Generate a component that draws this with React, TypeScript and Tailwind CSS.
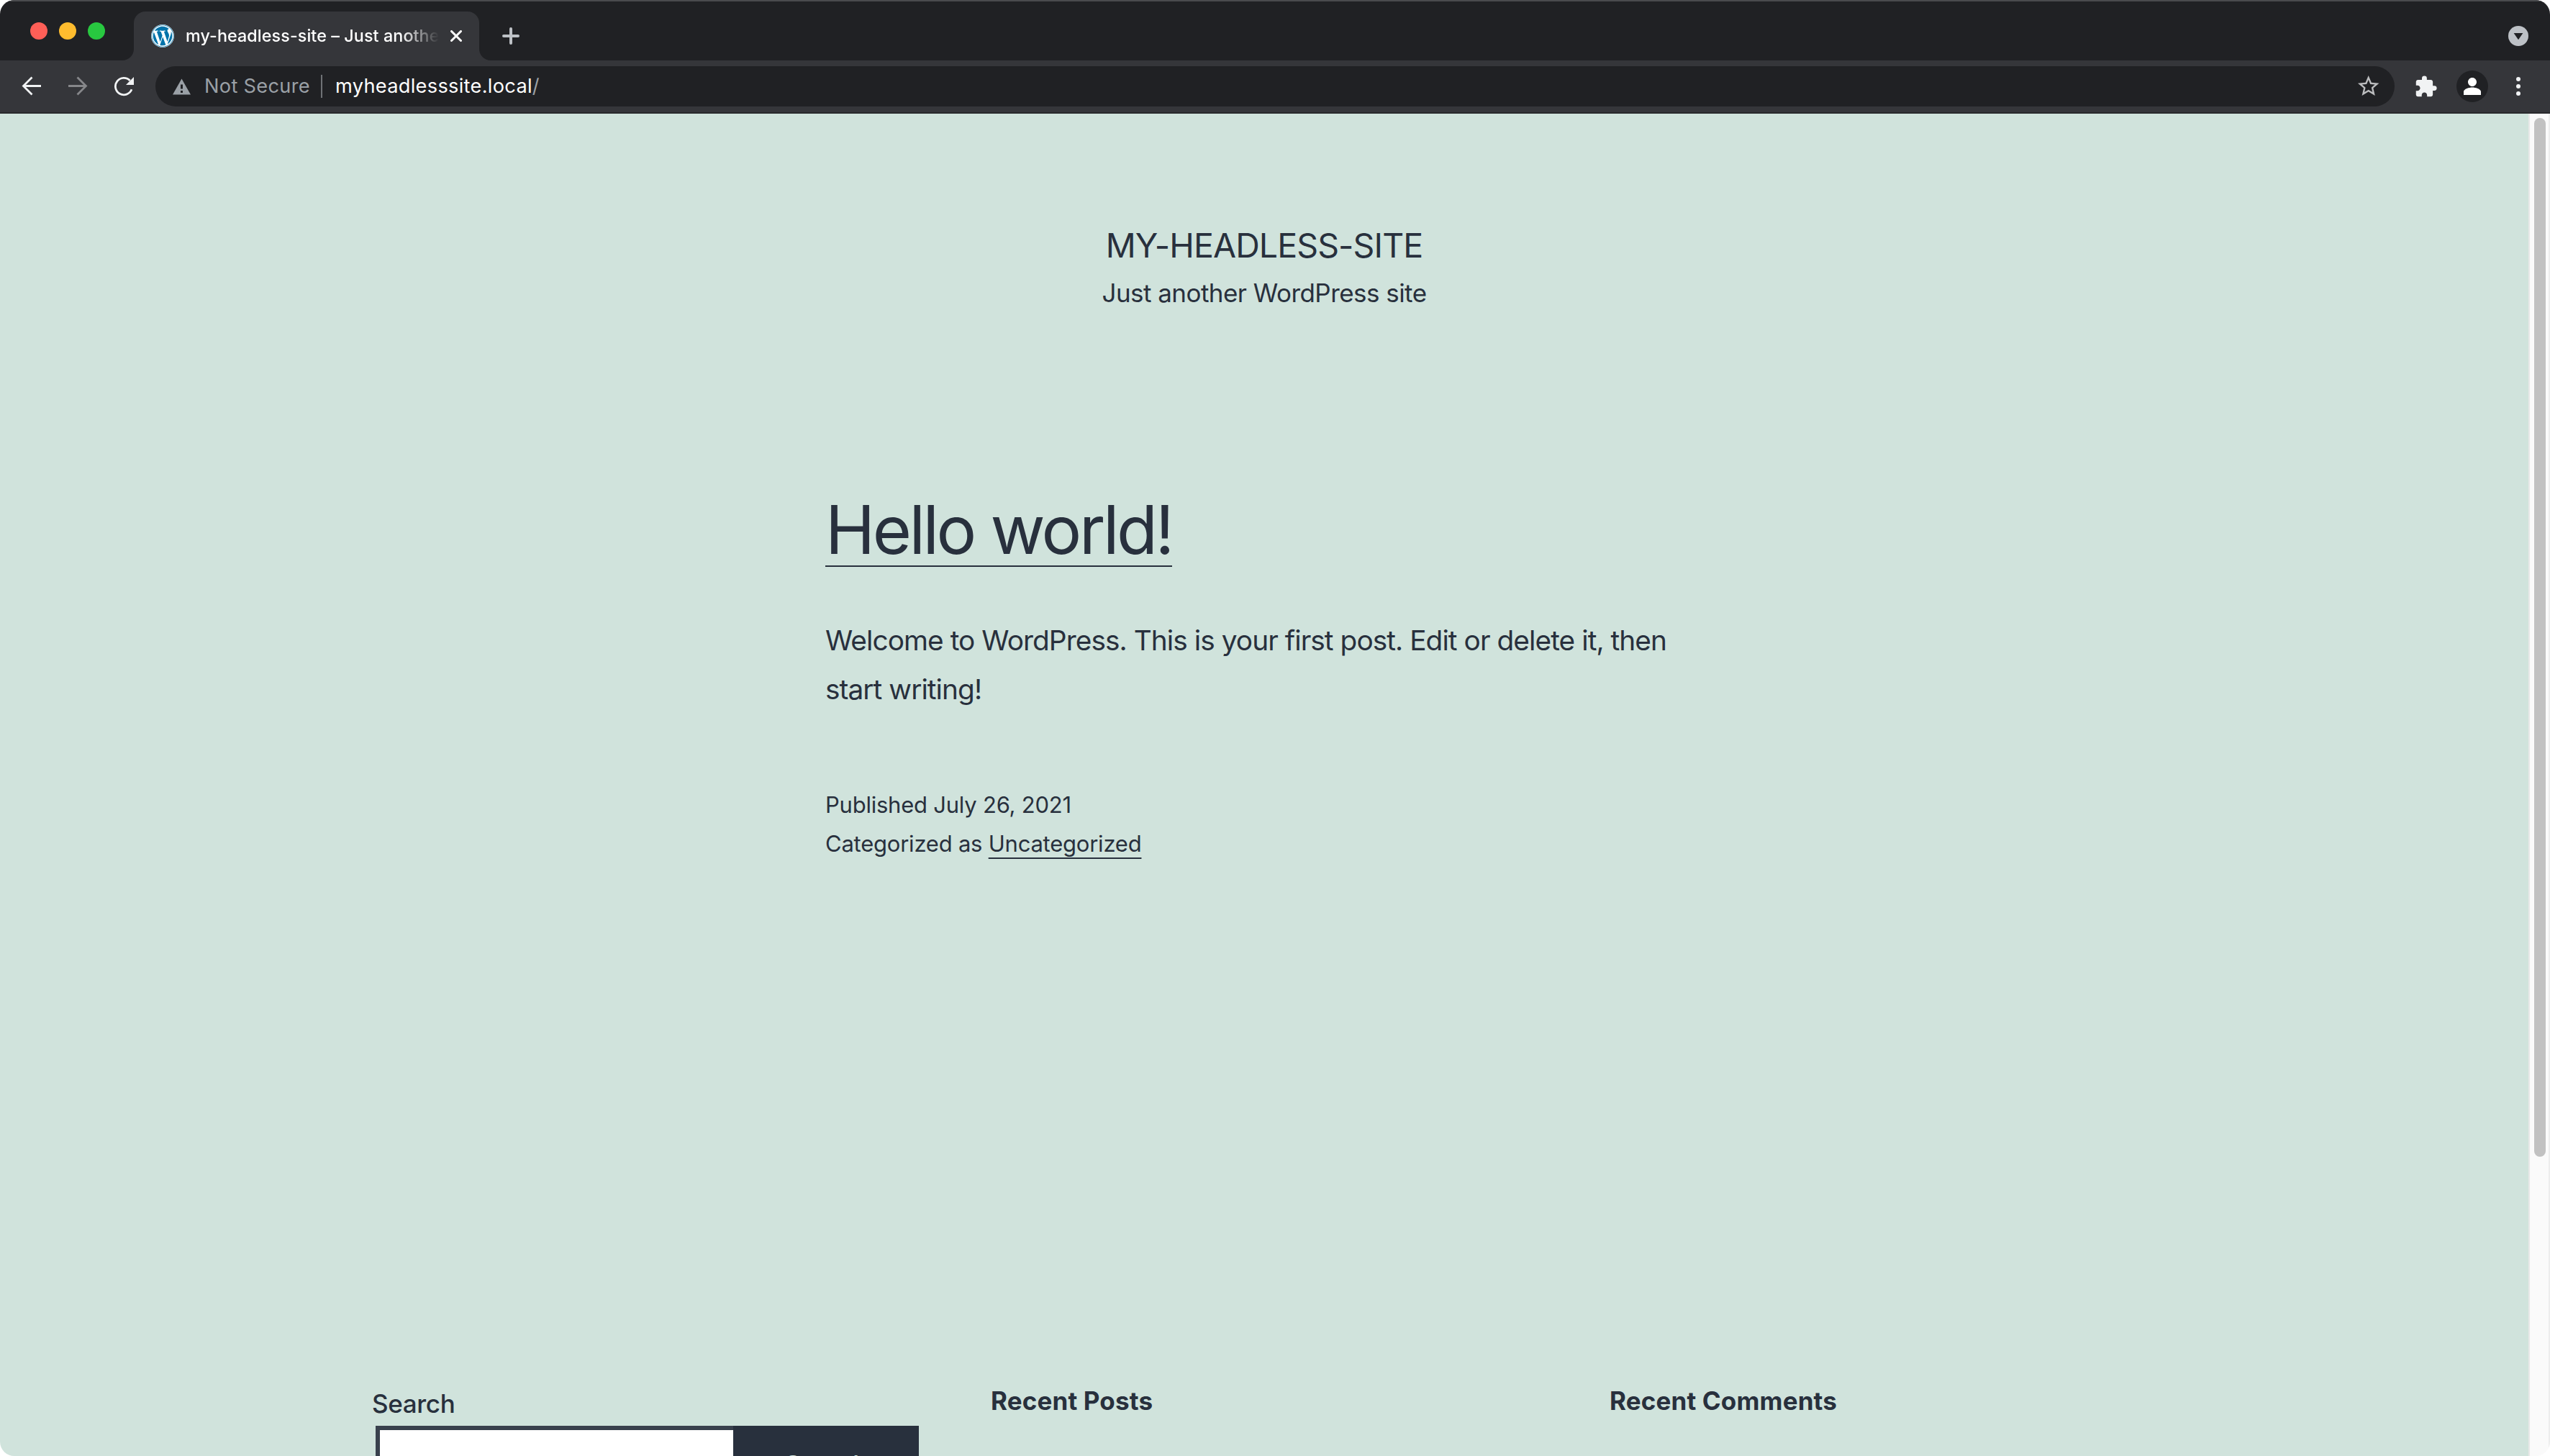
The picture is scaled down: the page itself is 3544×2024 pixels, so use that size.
import { FaWordpress } from "react-icons/fa";

interface WidgetTitleProps {
  children: string;
}

const TrafficLights = (): React.ReactElement => {
  return (
    <div className="mt-[29px] ml-[42px] flex h-6 w-32 shrink-0 gap-4">
      <span className="size-6 rounded-full bg-[#ff5f57]" />
      <span className="size-6 rounded-full bg-[#febc2e]" />
      <span className="size-6 rounded-full bg-[#28c840]" />
    </div>
  );
};

const Tab = (): React.ReactElement => {
  return (
    <div className="flex items-end">
      <div className="size-4 bg-[#35363a]">
        <div className="size-4 rounded-br-full bg-[#202124]" />
      </div>
      <div className="flex h-[68px] w-[480px] items-center rounded-t-2xl bg-[#35363a] pl-6">
        <span className="flex size-8 shrink-0 rounded-full bg-white">
          <FaWordpress className="size-8 text-[#0073aa]" />
        </span>
        <span className="ml-4 w-[352px] shrink-0 overflow-hidden mask-r-from-85% text-[23.3px] leading-8 font-medium tracking-[0.1px] whitespace-nowrap text-white">
          my-headless-site – Just another WordPress site
        </span>
        <svg className="ml-4 size-4" viewBox="0 0 16 16" fill="none" stroke="#fff" strokeWidth="3">
          <path d="M1.500 1.500 14.500 14.500M14.500 1.500 1.500 14.500" strokeLinecap="round" />
        </svg>
      </div>
      <div className="size-4 bg-[#35363a]">
        <div className="size-4 rounded-bl-full bg-[#202124]" />
      </div>
    </div>
  );
};

const TabStrip = (): React.ReactElement => {
  return (
    <div className="flex h-[84px] border-t-2 border-[#4a4b4e] bg-[#202124]">
      <TrafficLights />
      <div className="flex h-[82px] items-end">
        <Tab />
      </div>
      <svg className="mt-9 ml-4 size-6" viewBox="0 0 24 24" fill="none" stroke="#bdc1c6" strokeWidth="4">
        <path d="M2 12h20M12 2v20" strokeLinecap="round" />
      </svg>
      <svg className="mt-[34px] mr-[30px] ml-auto size-7" viewBox="0 0 28 28">
        <circle cx="14" cy="14" r="14" fill="#bdc1c6" />
        <path d="M7.6 10h12.8L14 19.2z" fill="#202124" />
      </svg>
    </div>
  );
};

const Toolbar = (): React.ReactElement => {
  return (
    <div className="flex h-[74px] items-center border-b-2 border-[#28292c] bg-[#35363a] pl-[30px]">
      <svg className="size-7" viewBox="0 0 28 28" fill="none" stroke="#f1f3f4" strokeWidth="2.8">
        <path d="M27 13.5H3M14.5 1.5 2.5 13.5l12 12" />
      </svg>
      <svg className="ml-9 size-7" viewBox="0 0 28 28" fill="none" stroke="#86878a" strokeWidth="2.8">
        <path d="M1 13.5h24M13.5 1.5l12 12-12 12" />
      </svg>
      <svg className="ml-9 size-7" viewBox="0 0 28 28" fill="none">
        <path d="M25 18.3A11.7 11.7 0 1 1 22.6 6" stroke="#f1f3f4" strokeWidth="2.8" />
        <path d="M28 1v11H17z" fill="#f1f3f4" />
      </svg>
      <div className="ml-[30px] flex h-14 w-[3112px] items-center rounded-full bg-[#202124] pl-6">
        <svg className="size-[25px]" viewBox="0 0 25 22" fill="#9aa0a6">
          <path fillRule="evenodd" d="M12.5 0 25 22H0zM11 8v6h3V8zm0 8.500v3h3v-3z" />
        </svg>
        <span className="ml-[19px] w-[149px] text-[27.2px] leading-9 tracking-[0.3px] whitespace-nowrap text-[#9aa0a6]">
          Not Secure
        </span>
        <span className="ml-[13px] h-8 w-0.5 bg-[#6f7276]" />
        <span className="ml-[18px] text-[27.2px] leading-9 tracking-[0.3px] whitespace-nowrap text-white">
          myheadlesssite.local<span className="text-[#9aa0a6]">/</span>
        </span>
        <svg className="mr-[19px] ml-auto size-[35.4px]" viewBox="0 0 24 24" fill="#bcbdbf">
          <path d="M22 9.24l-7.19-.62L12 2 9.19 8.63 2 9.24l5.46 4.73L5.82 21 12 17.27 18.18 21l-1.63-7.03L22 9.24zM12 15.4l-3.76 2.27 1-4.28-3.32-2.88 4.38-.38L12 6.1l1.71 4.04 4.38.38-3.32 2.88 1 4.28L12 15.4z" />
        </svg>
      </div>
      <svg className="ml-[27px] size-[33px]" viewBox="0 0 24 24" fill="#f1f3f4">
        <path d="M20.5 11H19V7c0-1.1-.9-2-2-2h-4V3.500a2.500 2.500 0 0 0-5 0V5H4c-1.100 0-1.990.9-1.990 2v3.800H3.500c1.490 0 2.700 1.210 2.700 2.700s-1.210 2.700-2.700 2.700H2V20c0 1.100.9 2 2 2h3.800v-1.500c0-1.490 1.210-2.700 2.700-2.700s2.700 1.210 2.700 2.700V22H17c1.100 0 2-.9 2-2v-4h1.500a2.500 2.500 0 0 0 0-5z" />
      </svg>
      <span className="ml-[26px] flex size-11 items-center justify-center rounded-full bg-[#202124]">
        <svg className="size-9" viewBox="0 0 24 24" fill="#fff">
          <path d="M12 12c2.210 0 4-1.790 4-4s-1.790-4-4-4-4 1.790-4 4 1.790 4 4 4zm0 1c-2.670 0-8 1.340-8 4v3h16v-3c0-2.660-5.330-4-8-4z" />
        </svg>
      </span>
      <div className="ml-[39px] flex flex-col gap-[3.6px]">
        <span className="size-[6.4px] rounded-full bg-[#f1f3f4]" />
        <span className="size-[6.4px] rounded-full bg-[#f1f3f4]" />
        <span className="size-[6.4px] rounded-full bg-[#f1f3f4]" />
      </div>
    </div>
  );
};

const WidgetTitle = ({ children }: WidgetTitleProps): React.ReactElement => {
  return <h2 className="text-[35px] leading-[54px] font-bold tracking-[0.15px]">{children}</h2>;
};

const Footer = (): React.ReactElement => {
  return (
    <footer className="mx-auto mt-[720px] grid w-[2480px] grid-cols-3 gap-[100px]">
      <div className="pt-1">
        <label htmlFor="search" className="block text-[35px] leading-[54px] font-medium tracking-[-0.35px]">
          Search
        </label>
        <div className="mt-1 ml-[5px] flex h-[104px]">
          <input
            id="search"
            type="text"
            className="w-[498px] border-6 border-r-0 border-[#39414d] bg-white"
          />
          <button className="w-[258px] bg-[#28303d] pt-1 text-[35px] leading-[54px] font-medium tracking-[-0.35px] text-[#d1e4dd]">
            Search
          </button>
        </div>
      </div>
      <WidgetTitle>Recent Posts</WidgetTitle>
      <WidgetTitle>Recent Comments</WidgetTitle>
    </footer>
  );
};

const Page = (): React.ReactElement => {
  return (
    <div className="h-[1866px] w-[3514px] overflow-hidden bg-[#d0e3dc] pt-[153px] text-[#28303d]">
      <header className="text-center">
        <h1 className="text-[46.5px] leading-[60px] tracking-[-0.9px] uppercase">my-headless-site</h1>
        <p className="mt-[7px] text-[35px] leading-[58px] tracking-[-0.54px]">Just another WordPress site</p>
      </header>
      <article className="mx-auto mt-[250px] w-[1220px]">
        <h2 className="flex">
          <a href="#" className="border-b-2 border-[#28303d] text-[93px] leading-[100px] tracking-[-3.45px]">
            Hello world!
          </a>
        </h2>
        <p className="mt-[68px] text-[38.8px] leading-[68px] tracking-[-0.94px] whitespace-nowrap">
          Welcome to WordPress. This is your first post. Edit or delete it, then
          <br />
          start writing!
        </p>
        <div className="mt-[100px] text-[31px] leading-[54px] tracking-[-0.23px]">
          <p>Published July 26, 2021</p>
          <p>
            Categorized as{" "}
            <a href="#" className="underline decoration-2 underline-offset-8 [text-decoration-skip-ink:none]">
              Uncategorized
            </a>
          </p>
        </div>
      </article>
      <Footer />
    </div>
  );
};

const App = (): React.ReactElement => {
  return (
    <div className="h-[2024px] w-[3544px] bg-white font-['Inter',sans-serif]">
      <div className="h-full overflow-hidden rounded-[20px]">
        <TabStrip />
        <Toolbar />
        <div className="flex">
          <Page />
          <div className="h-[1866px] w-[30px] border-r-2 border-l-2 border-r-[#ededed] border-l-[#e8e8e8] bg-[#fafafa] pt-1.5 pl-1.5">
            <div className="h-[1444px] w-4 rounded-full bg-[#c1c1c1]" />
          </div>
        </div>
      </div>
    </div>
  );
};

export default App;
